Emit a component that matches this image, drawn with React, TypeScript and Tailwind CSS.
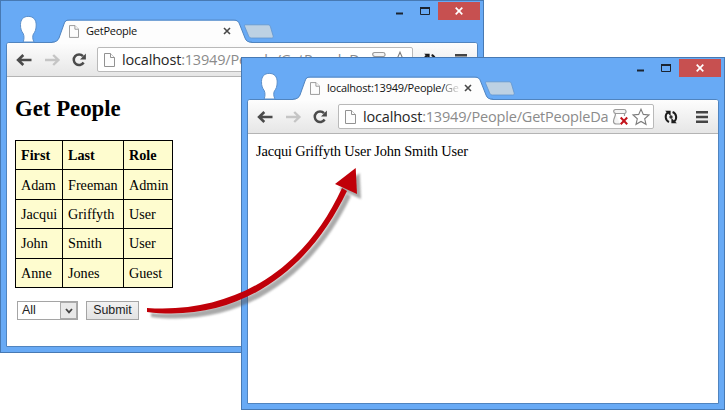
import type { ReactNode } from "react";

const UI_FONT = "font-['Open_Sans','Noto_Sans',sans-serif]";
const SERIF = "font-['Liberation_Serif','Times_New_Roman',serif]";

function PageIcon({ className }: { className: string }) {
  return (
    <svg viewBox="0 0 11 14" className={className} fill="#fdfdfd" stroke="#929292" strokeWidth="1">
      <path d="M.5 .5H6.5L10.5 4.5V13.5H.5Z" />
      <path d="M6.5 .5V4.5H10.5" />
    </svg>
  );
}

function ProfileIcon() {
  return (
    <svg viewBox="0 0 22 28" className="ml-[11px] mt-[14px] h-[28px] w-[22px] shrink-0">
      <path
        d="M5.2 27C6.2 24 6.3 21 5.2 18.5C3.6 16.5 2.4 14 2.5 9.5C2.6 4.6 5.2 1.4 10.2 1.4C15.4 1.4 18.2 4.6 18.2 10C18.2 14.5 17 17 15.6 18.7C14.5 20.2 14.3 24 16 27Z"
        fill="#fff"
        stroke="#5b8fca"
        strokeWidth="1"
      />
    </svg>
  );
}

function TabStrip({ title, faded }: { title: string; faded?: string }) {
  return (
    <div className="flex h-[42px]">
      <div className="flex w-[45px] shrink-0">
        <ProfileIcon />
      </div>
      <div className="relative mt-[18px] flex h-[24px] w-[200px] shrink-0 items-center pl-[17px]">
        <svg viewBox="0 0 200 24" className="absolute inset-0 h-[25px] w-[200px]">
          <path
            d="M-1 23.5C4 23 6 21 7 18.5L12 4.5C13 1.8 14 1 17 1H182C185 1 186.5 2 187.5 4.5L193 18.5C194 21.5 196 23 201 23.5V24H-1Z"
            fill="#fdfdfd"
          />
          <path
            d="M0 22.7C4 22.5 6 21 7 18.5L12 4.5C13 1.5 14 .6 17 .6H182C185 .6 186.5 2 187.5 4.5L193 18.5C194 21.5 196 22.7 200 22.7"
            fill="none"
            stroke="#5084bf"
            strokeWidth="1"
          />
        </svg>
        <PageIcon className="relative h-[13px] w-[10px] shrink-0" />
        <span className={"relative ml-[7px] w-[135px] whitespace-nowrap text-[11px] leading-[16px] tracking-[-0.24px] text-[#111] " + UI_FONT}>
          {title}
          <span className="bg-gradient-to-r from-[#666] to-[#ddd] bg-clip-text text-transparent">{faded}</span>
        </span>
        <svg viewBox="0 0 8 8" className="relative ml-[2px] size-[8px] shrink-0" stroke="#484848" strokeWidth="1.6">
          <path d="M1 1L7 7M7 1L1 7" />
        </svg>
      </div>
      <svg viewBox="0 0 32 16" className="-ml-[10px] mt-[23px] h-[16px] w-[32px] shrink-0">
        <path
          d="M3.5 .8H26C27.5 .8 28 1.5 28.5 3L31 11.5C31.5 13.3 31 14 29.5 14H9.5C8 14 7.2 13.3 6.6 11.8L2.8 2.8C2.3 1.5 2.5 .8 3.5 .8Z"
          fill="#bdd1e3"
          stroke="#6395cd"
          strokeWidth=".8"
        />
      </svg>
      <div className="ml-auto mt-px flex h-[18px]">
        <svg viewBox="0 0 48 18" className="h-[18px] w-[48px]">
          <path d="M6 11.5H13" stroke="#1b2430" strokeWidth="2" />
          <path d="M30.5 6V12.5H39.5V6Z" fill="none" stroke="#1b2430" />
          <path d="M30 6H40" stroke="#1b2430" strokeWidth="2" />
        </svg>
        <div className="flex w-[42px] items-center justify-center bg-[#c75050]">
          <svg viewBox="0 0 8 8" className="size-[8px]" stroke="#fff" strokeWidth="1.7">
            <path d="M.7 .7L7.3 7.3M7.3 .7L.7 7.3" />
          </svg>
        </div>
      </div>
    </div>
  );
}

function Toolbar() {
  return (
    <div className="flex h-[34px] shrink-0 items-center rounded-t-[2px] border-b border-[#b4b4b4] bg-gradient-to-b from-[#fdfdfd] to-[#e6e6e6]">
      <svg viewBox="0 0 90 24" className="h-[24px] w-[90px] shrink-0" fill="none">
        <path d="M24.5 12H11.5M16.3 7L11.1 12L16.3 17" stroke="#4b4b4b" strokeWidth="2.6" />
        <path d="M38 12H51M46.2 7L51.4 12L46.2 17" stroke="#c5c5c5" strokeWidth="2.4" />
        <path d="M76 8.2A5.3 5.3 0 1 0 76.6 14.5" stroke="#4b4b4b" strokeWidth="2.5" />
        <path d="M78.9 5.5V11.4H73Z" fill="#4b4b4b" />
      </svg>
      <div className="flex h-[25px] w-[316px] shrink-0 items-center rounded-[2px] border border-[#b9b9b9] bg-white pl-[6px]">
        <PageIcon className="h-[14px] w-[11px] shrink-0" />
        <span className={"ml-[7px] w-[246px] shrink-0 whitespace-nowrap text-[14.5px] leading-[20px] tracking-[-0.18px] text-[#8b8b8b] " + UI_FONT}>
          <span className="text-[#262626]">localhost</span>:13949/People/GetPeopleDa
        </span>
        <svg viewBox="0 0 40 20" className="ml-[3px] h-[20px] w-[40px] shrink-0" fill="none">
          <path
            d="M3.5 2.5H12C14.5 2.5 14.8 6.3 12.5 6.5H4C1 6.3 1 2.5 3.5 2.5ZM3.5 6.5C3.5 10 1.5 11 1.5 14.5C1.5 16.5 2.5 17 4.5 17H8M12.5 6.5V9"
            stroke="#9a9a9a"
            strokeWidth="1.2"
            fill="#f4f4f4"
          />
          <path d="M8.7 10.5L15.2 17.2M15.2 10.5L8.7 17.2" stroke="#c3141c" strokeWidth="2" />
          <path
            d="M29 2.2L31.3 7.4L37 8L32.7 11.8L34 17.3L29 14.4L24 17.3L25.3 11.8L21 8L26.7 7.4Z"
            stroke="#7d7d7d"
            strokeWidth="1.1"
            fill="#fff"
          />
        </svg>
      </div>
      <svg viewBox="0 0 60 24" className="h-[24px] w-[60px] shrink-0" fill="none">
        <path d="M15 17A5.6 5.6 0 0 1 13.7 7.6" stroke="#1c1c1c" strokeWidth="2" />
        <path d="M11.2 5.8H16.6V11Z" fill="#1c1c1c" />
        <path d="M18.6 7A5.6 5.6 0 0 1 20.3 16.4" stroke="#1c1c1c" strokeWidth="2" />
        <path d="M22.8 18.2H17.4V13Z" fill="#1c1c1c" />
        <circle cx="17" cy="12" r="1.7" fill="#333" />
        <path d="M42 7.3H54M42 12H54M42 16.7H54" stroke="#454545" strokeWidth="2.5" />
      </svg>
    </div>
  );
}

function BrowserWindow({ title, faded, place, children }: { title: string; faded?: string; place: string; children: ReactNode }) {
  return (
    <section className={"absolute flex h-[353px] w-[484px] flex-col border border-[#4779b3] bg-[#68aaf5] " + place}>
      <div className="relative z-10 -mb-px pr-[3px] pl-[6px]">
        <TabStrip title={title} faded={faded} />
      </div>
      <div className="mx-[5px] mb-[5px] flex min-h-0 flex-1 flex-col rounded-t-[3px] border border-[#5084bf] bg-white">
        <Toolbar />
        {children}
      </div>
    </section>
  );
}

const PEOPLE = [
  ["Adam", "Freeman", "Admin"],
  ["Jacqui", "Griffyth", "User"],
  ["John", "Smith", "User"],
  ["Anne", "Jones", "Guest"],
];

function PeoplePage() {
  return (
    <div className={"pl-[8px] text-[14.2px] text-black " + SERIF}>
      <h2 className="mt-[19px] text-[22.8px] leading-[26px] font-bold">Get People</h2>
      <table className="mt-[18px] h-[148px] w-[157px] table-fixed border-collapse bg-[#fefccf] text-left leading-[18px]">
        <colgroup>
          <col className="w-[47px]" />
          <col className="w-[61px]" />
          <col className="w-[49px]" />
        </colgroup>
        <tbody>
          <tr className="h-[29px]">
            {["First", "Last", "Role"].map((h) => (
              <th key={h} className="border border-black py-0 pr-0 pl-[5px] font-bold">{h}</th>
            ))}
          </tr>
          {PEOPLE.map((row) => (
            <tr key={row[0]} className="h-[29px]">
              {row.map((cell, i) => (
                <td key={i} className="border border-black py-0 pr-0 pl-[5px]">{cell}</td>
              ))}
            </tr>
          ))}
        </tbody>
      </table>
      <div className="mt-[13px] ml-[2px] flex h-[19px] gap-[8px] font-['Liberation_Sans',Arial,sans-serif] text-[12.4px] leading-[17px] text-[#222]">
        <div className="flex w-[61px] border border-[#a5a5a5] bg-white pl-[4px]">
          <span className="flex-1">All</span>
          <span className="flex w-[17px] items-center justify-center border border-[#aaa] bg-[#e9e9e9]">
            <svg viewBox="0 0 8 6" className="h-[6px] w-[8px]" fill="none" stroke="#444" strokeWidth="1.8">
              <path d="M1 1L4 4.4L7 1" />
            </svg>
          </span>
        </div>
        <button className="w-[53px] border border-[#a5a5a5] bg-gradient-to-b from-[#f2f2f2] to-[#e3e3e3]">Submit</button>
      </div>
    </div>
  );
}

function Arrow() {
  return (
    <svg viewBox="0 0 725 410" className="pointer-events-none absolute inset-0 z-20 h-[410px] w-[725px]">
      <defs>
        <filter id="soft" x="-10%" y="-10%" width="120%" height="120%">
          <feGaussianBlur stdDeviation="1.3" />
        </filter>
        <g id="arrow">
          <path d="M147 308C235 314 305 269 342 188L347 191C308 273 237 323 147 312Z" />
          <path d="M355.7 168L335 184L357 194Z" />
        </g>
      </defs>
      <use href="#arrow" x="4" y="5" fill="#555" opacity=".5" filter="url(#soft)" />
      <use href="#arrow" fill="#c00009" />
    </svg>
  );
}

export default function App() {
  return (
    <main className="relative h-[410px] w-[725px] overflow-hidden bg-white">
      <BrowserWindow title="GetPeople" place="top-0 left-0 z-0">
        <PeoplePage />
      </BrowserWindow>
      <BrowserWindow title="localhost:13949/People/" faded="Ge" place="top-[57px] left-[241px] z-10">
        <p className={"mt-[8px] pl-[8px] text-[14.4px] leading-[18px] tracking-[-0.16px] text-black " + SERIF}>
          Jacqui Griffyth User John Smith User
        </p>
      </BrowserWindow>
      <Arrow />
    </main>
  );
}
